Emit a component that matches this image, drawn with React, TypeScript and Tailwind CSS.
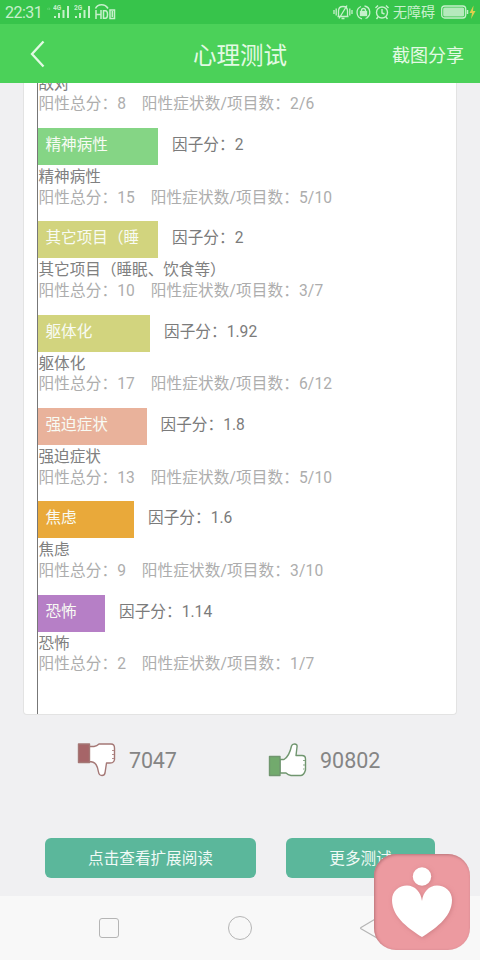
import React from "react";

type Factor = {
  name: string;
  label: string;
  score: string;
  total: string;
  ratio: string;
  bar: string;
};

const factors: Factor[] = [
  { name: "精神病性", label: "精神病性", score: "2", total: "15", ratio: "5/10", bar: "w-[120px] bg-[#85d585]" },
  { name: "其它项目（睡眠、饮食等）", label: "其它项目（睡", score: "2", total: "10", ratio: "3/7", bar: "w-[120px] bg-[#d2d47e]" },
  { name: "躯体化", label: "躯体化", score: "1.92", total: "17", ratio: "6/12", bar: "w-[112px] bg-[#d2d47e]" },
  { name: "强迫症状", label: "强迫症状", score: "1.8", total: "13", ratio: "5/10", bar: "w-[108.500px] bg-[#e9b29b]" },
  { name: "焦虑", label: "焦虑", score: "1.6", total: "9", ratio: "3/10", bar: "w-[96px] bg-[#e9a93a]" },
  { name: "恐怖", label: "恐怖", score: "1.14", total: "2", ratio: "1/7", bar: "w-[67px] bg-[#b67fc6]" },
];

function Signal({ label }: { label: string }) {
  return (
    <svg width="18" height="16" viewBox="0 0 18 16" fill="#c6f0cb">
      <text x="0" y="6" fontSize="6.5" fontWeight="700" fontFamily="Roboto">{label}</text>
      <rect x="1" y="12" width="2" height="2" />
      <rect x="5" y="9" width="2" height="5" />
      <rect x="9.5" y="6" width="2" height="8" />
      <rect x="14" y="2" width="2" height="12" />
    </svg>
  );
}

function StatusBar() {
  return (
    <div className="flex h-6 items-center bg-[#37c44b] pl-[5px] text-[#c6f0cb]">
      <span className="w-[40px] pt-px text-[16px] leading-6 tracking-[-0.5px]">22:31</span>
      <span className="mb-2 w-[8px] pl-[2px] text-[6px] leading-[8px] opacity-50">‹›</span>
      <Signal label="4G" />
      <span className="w-[3px]" />
      <Signal label="2G" />
      <svg className="ml-[2px]" width="23" height="18" viewBox="0 0 23 18" fill="none" stroke="#c6f0cb" strokeWidth="1.5">
        <path d="M1.500 5.500C4 .5 11 .5 14 5.500" strokeWidth="1.600" />
        <path d="M2 7v9M7 7v9M2 11.500h5M9.500 7.700v7.600h1.800q2.200 0 2.200-3.800t-2.200-3.800z" />
        <path d="M16 7h4.500v8.500H16zM18.300 8v6" />
      </svg>
      <div className="ml-auto flex items-center">
        <svg width="20" height="18" viewBox="0 0 20 18" fill="none" stroke="#c6f0cb" strokeWidth="1.300">
          <path d="M1 7v4M3.200 5.500v7M16.800 5.500v7M19 7v4M5.500 13.500V8q0-4.500 4.500-4.500T14.500 8v5.500zM4.500 13.500h11M8.500 15.500h3M6 15.500L14 2.500" />
        </svg>
        <svg className="ml-[2px]" width="17" height="18" viewBox="0 0 17 18" fill="none" stroke="#c6f0cb" strokeWidth="1.300">
          <path d="M7 15.800A6.500 6.500 0 0 1 6 3.500M9.500 3A6.500 6.500 0 0 1 10.500 15.500M14 12.500l-2 2.500" />
          <rect x="5.500" y="8.500" width="6" height="4" fill="#c6f0cb" />
          <path d="M6.500 8.500V7.500a2 2 0 0 1 4 0V8.500" />
        </svg>
        <svg className="ml-[2px]" width="16" height="18" viewBox="0 0 16 18" fill="none" stroke="#c6f0cb" strokeWidth="1.400">
          <circle cx="8" cy="9.500" r="5.500" />
          <path d="M8 6v4l2.500 1M1.500 5L4 2.500M14.500 5L12 2.500M4 14l-1.500 2M12 14l1.500 2" />
        </svg>
        <span className="ml-[3px] w-[44px] text-[14px] leading-6">无障碍</span>
        <svg className="ml-[4px]" width="39" height="18" viewBox="0 0 39 18">
          <rect x="0.700" y="3" width="24" height="12" rx="3" fill="none" stroke="#c6f0cb" strokeWidth="1.300" />
          <rect x="2.200" y="4.500" width="21" height="9" rx="1.500" fill="#b5e9bc" />
          <path d="M26.500 7v4" stroke="#c6f0cb" strokeWidth="1.500" />
          <path d="M32.500 2.500L28.500 10h2.500l-1 6 4.500-8H32z" fill="#dccf4c" />
        </svg>
      </div>
    </div>
  );
}

function Header() {
  return (
    <div className="grid h-[59px] grid-cols-3 items-center bg-[#4bd159] text-[#e3fae4]">
      <svg className="ml-[30px]" width="16" height="28" viewBox="0 0 16 28" fill="none" stroke="#e3fae4" strokeWidth="2.300">
        <path d="M13.500 1.500L2 14 13.500 26.500" />
      </svg>
      <h1 className="pt-[5px] text-center text-[23.500px] leading-8">心理测试</h1>
      <span className="pr-[16px] pt-[4px] text-right text-[18px] leading-8">截图分享</span>
    </div>
  );
}

function Details({ total, ratio }: { total: string; ratio: string }) {
  return (
    <div className="h-[21px] whitespace-nowrap pl-[0.500px] leading-[23px] tracking-[0.140px] text-[#adadad]">
      阳性总分：{total}　阳性症状数/项目数：{ratio}
    </div>
  );
}

function FactorRow({ factor }: { factor: Factor }) {
  return (
    <div className="h-[93.350px]">
      <div className="flex h-[37px]">
        <div className={`h-[37px] shrink-0 whitespace-nowrap pl-[7.500px] leading-[34px] text-[#f8fbf4] ${factor.bar}`}>{factor.label}</div>
        <div className="pl-[14px] leading-[34px] tracking-[0.060px] text-[#7b7b7b]">因子分：{factor.score}</div>
      </div>
      <div className="h-[21.500px] pl-[0.500px] leading-[24px] text-[#808080]">{factor.name}</div>
      <Details total={factor.total} ratio={factor.ratio} />
    </div>
  );
}

function ThumbUp() {
  return (
    <svg width="40" height="36" viewBox="0 0 40 36" stroke="#70966f" strokeWidth="1.400" strokeLinejoin="round">
      <path d="M12 17.500H16C20 15 22 11 23.500 4Q24 2 26.500 2Q29.500 2 29 5L28 13.500H34Q37.500 13.500 37.500 17L37.500 28Q36 33 33 33.500H23Q20 33 18 31H12Z" fill="#fff" />
      <rect x="1.500" y="14.500" width="10.500" height="19" fill="#72aa6d" />
      <path d="M35 18.500h2M35 23h2M35 27h1.500" strokeWidth=".8" />
    </svg>
  );
}

function ThumbDown() {
  return (
    <svg width="40" height="36" viewBox="0 0 40 36" stroke="#a47775" strokeWidth="1.400" strokeLinejoin="round">
      <path d="M12 4.500H17Q20 4 22 2H34Q37.500 2 37.500 6V17.500Q37 21 33 21H29.500L28 31Q27.500 33.500 25 33.500Q22 33.500 21.500 30C20.500 24 19 19.500 12 19.500Z" fill="#fff" />
      <rect x="1.500" y="2" width="11" height="18.500" fill="#a66568" />
      <path d="M35 8.500h2M35 12.500h2M35 16.500h2" strokeWidth=".8" />
    </svg>
  );
}

function NavBar() {
  return (
    <div className="flex h-16 items-center bg-[#f8f8f8]">
      <div className="ml-[99px] h-5 w-5 rounded-[3px] border border-[#b5b5b5]" />
      <div className="ml-[109px] h-6 w-6 rounded-full border border-[#b5b5b5]" />
      <svg className="ml-[107px]" width="20" height="24" viewBox="0 0 20 24" fill="none" stroke="#b5b5b5" strokeWidth="1.200" strokeLinejoin="round">
        <path d="M18 2L2 11.500Q1 12 2 12.800L18 22z" />
      </svg>
    </div>
  );
}

export default function App() {
  return (
    <div lang="zh-CN" className="relative flex h-[960px] w-[480px] flex-col overflow-hidden bg-[#f0f0f2] font-[Roboto,'Noto_Sans_CJK_SC',sans-serif] text-[15.600px]">
      <StatusBar />
      <Header />
      <main className="flex h-[813px] flex-col">
        <section className="mx-[23px] h-[632px] shrink-0 overflow-hidden rounded-b-[4px] border border-t-0 border-[#e3e3e3] bg-white pl-[13px]">
          <div className="h-full border-l border-[#777]">
            <div className="flex h-[45px] flex-col">
              <div className="-mt-[11.500px] h-[21.500px] shrink-0 pl-[0.500px] leading-[24px] text-[#808080]">敌对</div>
              <Details total="8" ratio="2/6" />
            </div>
            {factors.map((factor) => (
              <FactorRow key={factor.name} factor={factor} />
            ))}
          </div>
        </section>
        <div className="mt-[27px] flex h-9 items-center text-[21.500px] text-[#858585]">
          <div className="ml-[77px] flex w-[191px] items-center gap-3">
            <ThumbDown />
            <span className="pt-[2px] tracking-[-0.200px]">7047</span>
          </div>
          <div className="flex items-center gap-3">
            <ThumbUp />
            <span className="pt-[2px]">90802</span>
          </div>
        </div>
        <div className="ml-[45px] mt-[60px] flex gap-[30px] text-[15.600px] leading-[40px] text-[#f0faf6]">
          <button className="h-10 w-[211px] rounded-[6px] bg-[#5bb79b] pt-px">点击查看扩展阅读</button>
          <button className="h-10 w-[149px] rounded-[6px] bg-[#5bb79b] pt-px">更多测试</button>
        </div>
      </main>
      <NavBar />
      <div className="absolute left-[374px] top-[854px] h-24 w-24 overflow-hidden rounded-[22px] bg-[#ec9aa0] shadow-[inset_1px_1px_3px_#b77479]">
        <svg className="drop-shadow-[1px_1px_2px_#b96b7188]" width="96" height="96" viewBox="0 0 96 96" fill="#fff">
          <circle cx="48" cy="22.500" r="9.200" />
          <path d="M48 83C37 76 18 64 18 46C18 37 25 31.500 33 31.500C41 31.500 47 38 48 47C49 38 55 31.500 63 31.500C71 31.500 78 37 78 46C78 64 59 76 48 83Z" />
        </svg>
      </div>
    </div>
  );
}
